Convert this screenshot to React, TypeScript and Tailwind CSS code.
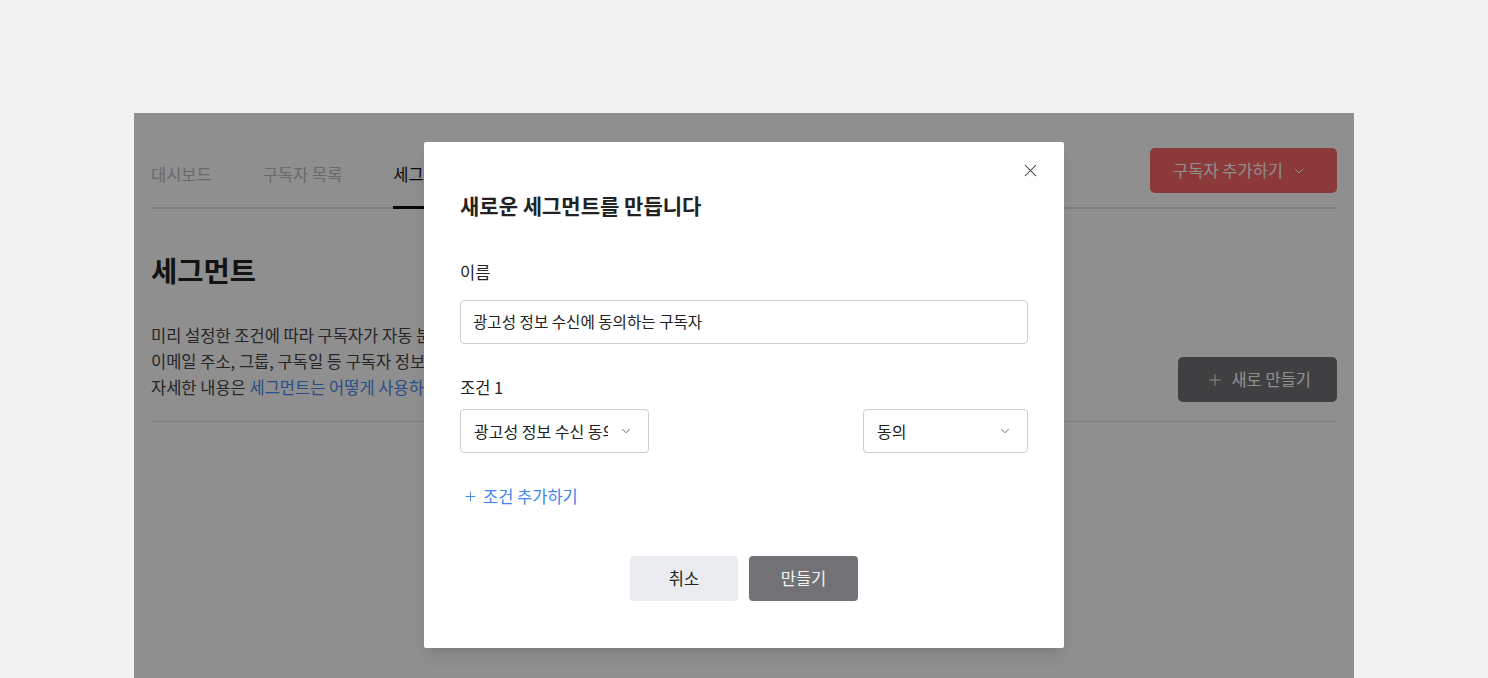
import { ChevronDown, Plus, X } from 'lucide-react'

const FONT = { fontFamily: '"Noto Sans CJK KR", "Noto Sans", sans-serif' }

const TABS = [
  { label: '대시보드', active: false },
  { label: '구독자 목록', active: false },
  { label: '세그먼트', active: true },
]

function SelectBox({ value, className }: { value: string; className: string }) {
  return (
    <div
      className={`flex h-[44px] items-center rounded-[4px] border border-[#cfcfcf] bg-white pl-[13px] text-[16px] leading-[22px] text-[#222] ${className}`}
    >
      <span className="min-w-0 flex-1 overflow-hidden whitespace-nowrap">{value}</span>
      <ChevronDown className="mr-[15px] ml-[11px] h-[14px] w-[14px] shrink-0 text-[#555]" strokeWidth={1.5} />
    </div>
  )
}

function SegmentModal() {
  return (
    <div className="absolute top-[29px] left-1/2 flex h-[506px] w-[640px] -translate-x-1/2 flex-col rounded-[2px] bg-white px-[36px] pt-[49px] text-[#222] shadow-lg">
      {/* close */}
      <button className="absolute top-[18px] right-[23px] text-[#333]">
        <X className="h-[21px] w-[21px]" strokeWidth={1.2} />
      </button>

      <h2 className="text-[21px] leading-[28px] font-semibold text-[#222]">새로운 세그먼트를 만듭니다</h2>

      <div className="mt-[42px] text-[16.5px] leading-[22px]">이름</div>
      <div className="mt-[17px] flex h-[44px] items-center rounded-[4px] border border-[#cfcfcf] px-[12px] text-[15.6px]">
        광고성 정보 수신에 동의하는 구독자
      </div>

      <div className="mt-[32px] text-[16.5px] leading-[22px]">조건 1</div>
      <div className="mt-[11px] flex items-center justify-between">
        <SelectBox value="광고성 정보 수신 동의" className="w-[189px]" />
        <SelectBox value="동의" className="w-[165px]" />
      </div>

      <button className="mt-[32px] flex items-center gap-[5px] self-start pl-[3px] text-[16.5px] leading-[22px] text-[#3d85f0]">
        <Plus className="h-[15px] w-[15px]" strokeWidth={1.5} />
        조건 추가하기
      </button>

      <div className="mt-[49px] flex justify-center gap-[11px]">
        <button className="h-[45px] w-[108px] rounded-[4px] bg-[#ebecf0] text-[16.5px] text-[#222]">취소</button>
        <button className="h-[45px] w-[109px] rounded-[4px] bg-[#727276] text-[16.5px] text-white/90">만들기</button>
      </div>
    </div>
  )
}

export default function App() {
  return (
    <div className="h-[678px] overflow-hidden bg-[#f2f2f2] pt-[113px]" style={FONT}>
      <div className="relative mx-auto h-[565px] w-[1220px] bg-white px-[17px] pt-[35px]">
        {/* header */}
        <div className="flex items-start justify-between border-b-2 border-[#e3e3e3]">
          <nav className="flex gap-[51px]">
            {TABS.map((t) => (
              <div
                key={t.label}
                className={
                  t.active
                    ? '-mb-[2px] border-b-[3px] border-[#111] pt-[14px] pb-[20px] text-[16.5px] leading-[24px] text-[#111]'
                    : 'pt-[14px] pb-[21px] text-[16.5px] leading-[24px] text-[#bdbdbd]'
                }
              >
                {t.label}
              </div>
            ))}
          </nav>
          <button className="flex h-[45px] items-center gap-[8px] rounded-[5px] bg-[#fa6767] pr-[30px] pl-[23px] text-[16.5px] text-white">
            구독자 추가하기
            <ChevronDown className="h-[16px] w-[16px]" strokeWidth={1.5} />
          </button>
        </div>

        <h1 className="mt-[43px] text-[28.5px] leading-[36px] font-bold text-[#222]">세그먼트</h1>

        <div className="mt-[34px] flex items-end justify-between border-b border-[#e3e3e3] pb-[19px]">
          <div className="pb-[2px] text-[16.5px] leading-[26px] text-[#444]">
            <p>미리 설정한 조건에 따라 구독자가 자동 분류되는 그룹입니다.</p>
            <p>이메일 주소, 그룹, 구독일 등 구독자 정보를 조건으로 설정할 수 있습니다.</p>
            <p>
              자세한 내용은 <span className="text-[#4a8af0]">세그먼트는 어떻게 사용하나요?</span>를 참고해 주세요.
            </p>
          </div>
          <button className="flex h-[45px] items-center gap-[7px] rounded-[5px] bg-[#727276] pr-[26px] pl-[28px] text-[16.5px] text-white">
            <Plus className="h-[18px] w-[18px]" strokeWidth={1.3} />
            새로 만들기
          </button>
        </div>

        {/* dim overlay */}
        <div className="absolute inset-0 bg-black/[0.44]" />

        <SegmentModal />
      </div>
    </div>
  )
}
